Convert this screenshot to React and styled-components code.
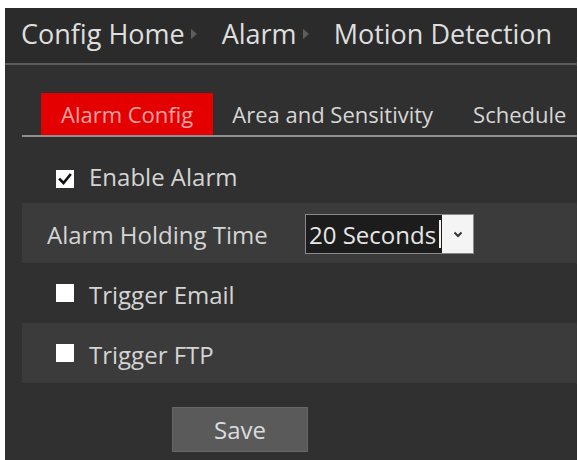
import React from "react";
import styled, { createGlobalStyle } from "styled-components";

const Global = createGlobalStyle`
  html, body { margin: 0; padding: 0; background: #ffffff; }
  body { font-family: "Open Sans", "Noto Sans", sans-serif; }
`;

const Frame = styled.div`
  margin: 8px 1px 0 5px;
  height: 452px;
  background: #303030;
  overflow: hidden;
  display: flex;
  flex-direction: column;
`;

const Header = styled.div`
  height: 57px;
  flex: none;
  background: #2b2b2b;
  border-bottom: 2px solid #5c5c5c;
  display: flex;
  align-items: center;
  padding-left: 16px;
  padding-bottom: 5px;
  box-sizing: border-box;
  color: #dedede;
  font-size: 27px;
  white-space: nowrap;
`;

const Crumb = styled.span`
  line-height: 1;
`;

const Arrow = styled.span`
  width: 0;
  height: 0;
  border-top: 5px solid transparent;
  border-bottom: 5px solid transparent;
  border-left: 6px solid #5e5e5e;
  margin: 2px 25px 0 6px;
`;

const Body = styled.div`
  padding-left: 17px;
  display: flex;
  flex-direction: column;
`;

const Tabs = styled.div`
  margin-top: 28px;
  padding-left: 19px;
  display: flex;
  border-bottom: 2px solid #8e8e8e;
  white-space: nowrap;
`;

const Tab = styled.div`
  height: 42px;
  padding: ${(p) => (p.$active ? "0 20px" : "0 21px 0 19px")};
  display: flex;
  align-items: center;
  font-size: 22px;
  color: ${(p) => (p.$active ? "#f9a3a3" : "#d6d6d6")};
  background: ${(p) => (p.$active ? "#e40000" : "transparent")};
`;

const Row = styled.div`
  height: ${(p) => (p.$first ? 66 : 60)}px;
  padding-top: ${(p) => (p.$first ? 14 : 0)}px;
  box-sizing: border-box;
  display: flex;
  align-items: center;
  padding-left: ${(p) => (p.$indent ? p.$indent : 34)}px;
  background: ${(p) => (p.$band ? "#3b3b3b" : "transparent")};
  color: #d4d4d4;
  font-size: 24px;
  white-space: nowrap;
`;

const Box = styled.span`
  width: 18px;
  height: 18px;
  background: #ffffff;
  flex: none;
  display: flex;
  align-items: center;
  justify-content: center;
  margin-right: 15px;
  margin-top: ${(p) => (p.$shift ? p.$shift : 0)}px;
`;

const Label = styled.span`
  padding-top: ${(p) => (p.$flat ? 0 : 3)}px;
  line-height: 1;
`;

const FieldLabel = styled(Label)`
  width: 258px;
`;

const Select = styled.div`
  display: flex;
  height: 40px;
  border: 1px solid #8a8a8a;
  box-sizing: border-box;
  margin-top: 2px;
`;

const SelectValue = styled.div`
  width: 136px;
  background: #1c1c1c;
  color: #e6e6e6;
  font-size: 24px;
  display: flex;
  align-items: center;
  padding-left: 3px;
  box-sizing: border-box;
  position: relative;
`;

const Caret = styled.span`
  position: absolute;
  right: 1px;
  top: 5px;
  width: 2px;
  height: 28px;
  background: #f2f2f2;
`;

const SelectButton = styled.div`
  width: 31px;
  background: #f4f4f4;
  display: flex;
  align-items: center;
  justify-content: center;
`;

const SaveWrap = styled.div`
  padding-left: 150px;
  margin-top: 24px;
`;

const SaveButton = styled.div`
  width: 136px;
  height: 45px;
  box-sizing: border-box;
  background: #5a5a5a;
  border: 1px solid #666666;
  color: #dcdcdc;
  font-size: 24px;
  display: flex;
  align-items: center;
  justify-content: center;
`;

const Check = () => (
  <svg width="14" height="14" viewBox="0 0 14 14">
    <path d="M2 7.5 L5.5 11 L12 3" stroke="#111" strokeWidth="2.6" fill="none" strokeLinecap="square" />
  </svg>
);

const Chevron = () => (
  <svg width="10" height="7" viewBox="0 0 10 7">
    <path d="M1.5 1.5 L5 5 L8.5 1.5" stroke="#333" strokeWidth="2" fill="none" />
  </svg>
);

export default function App() {
  return (
    <>
      <Global />
      <Frame>
        <Header>
          <Crumb>Config Home</Crumb>
          <Arrow />
          <Crumb>Alarm</Crumb>
          <Arrow />
          <Crumb>Motion Detection</Crumb>
        </Header>
        <Body>
          <Tabs>
            <Tab $active>Alarm Config</Tab>
            <Tab>Area and Sensitivity</Tab>
            <Tab>Schedule</Tab>
          </Tabs>
          <Row $first>
            <Box $shift={3}>
              <Check />
            </Box>
            <Label $flat>Enable Alarm</Label>
          </Row>
          <Row $band $indent={25}>
            <FieldLabel>Alarm Holding Time</FieldLabel>
            <Select>
              <SelectValue>
                20 Seconds
                <Caret />
              </SelectValue>
              <SelectButton>
                <Chevron />
              </SelectButton>
            </Select>
          </Row>
          <Row>
            <Box />
            <Label>Trigger Email</Label>
          </Row>
          <Row $band>
            <Box />
            <Label>Trigger FTP</Label>
          </Row>
          <SaveWrap>
            <SaveButton>Save</SaveButton>
          </SaveWrap>
        </Body>
      </Frame>
    </>
  );
}
